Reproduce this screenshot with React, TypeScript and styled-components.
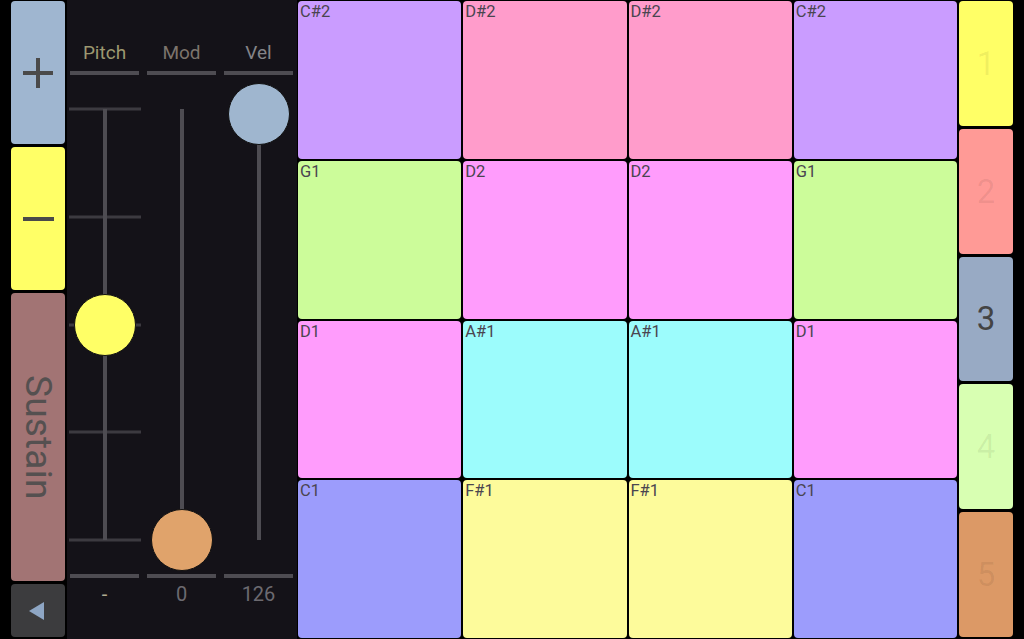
import { createGlobalStyle, styled } from "styled-components";

const GlobalStyle = createGlobalStyle`
  html, body {
    margin: 0;
    padding: 0;
    background: #000000;
    font-family: Roboto, "Liberation Sans", sans-serif;
  }
`;

const Screen = styled.div`
  display: flex;
  width: 1024px;
  height: 639px;
  background: #000000;
  overflow: hidden;
`;

const SideColumn = styled.div<{ $ml: number }>`
  display: flex;
  flex-direction: column;
  gap: 3px;
  width: 54px;
  margin-left: ${({ $ml }) => $ml}px;
  padding: 1px 0 2px;
  box-sizing: border-box;
`;

const SideButton = styled.div<{ $bg: string; $h?: number }>`
  background: ${({ $bg }) => $bg};
  border-radius: 4px;
  height: ${({ $h }) => ($h ? `${$h}px` : "auto")};
  flex: ${({ $h }) => ($h ? "none" : "1")};
  display: flex;
  align-items: center;
  justify-content: center;
  position: relative;
`;

const PlusMark = styled.div`
  position: relative;
  width: 30px;
  height: 30px;
  &::before,
  &::after {
    content: "";
    position: absolute;
    background: #4a4a4a;
  }
  &::before {
    left: 0;
    right: 0;
    top: 13px;
    height: 4px;
  }
  &::after {
    top: 0;
    bottom: 0;
    left: 13px;
    width: 4px;
  }
`;

const MinusMark = styled.div`
  width: 31px;
  height: 4px;
  background: #4a4a4a;
`;

const SustainText = styled.span`
  writing-mode: vertical-rl;
  font-size: 37px;
  color: #555050;
  letter-spacing: 0.2px;
`;

const BackArrow = styled.div`
  width: 0;
  height: 0;
  border-top: 9px solid transparent;
  border-bottom: 9px solid transparent;
  border-right: 15px solid #8ea6c4;
  margin-right: 4px;
`;

const Panel = styled.div`
  display: flex;
  gap: 8px;
  width: 230px;
  margin-left: 2px;
  padding: 0 4px 0 3px;
  box-sizing: border-box;
  background: #141218;
`;

const SliderColumn = styled.div`
  display: flex;
  flex-direction: column;
  width: 69px;
`;

const SliderLabel = styled.div<{ $color: string }>`
  height: 71px;
  display: flex;
  align-items: flex-end;
  justify-content: center;
  padding-bottom: 7px;
  box-sizing: border-box;
  font-size: 19px;
  color: ${({ $color }) => $color};
`;

const Rule = styled.div`
  height: 4px;
  background: #4e4c52;
`;

const TrackArea = styled.div`
  position: relative;
  height: 499px;
`;

const Rail = styled.div`
  position: absolute;
  left: 33px;
  width: 4px;
  top: 34px;
  bottom: 34px;
  background: #4e4c52;
`;

const Tick = styled.div`
  position: absolute;
  left: -1px;
  right: -2px;
  height: 3px;
  background: #3c3a40;
  transform: translateY(-1.5px);
`;

const Knob = styled.div<{ $color: string }>`
  position: absolute;
  left: 4px;
  width: 60px;
  height: 60px;
  border-radius: 50%;
  background: ${({ $color }) => $color};
  border: 1.5px solid #111;
  transform: translateY(-31px);
`;

const ValueText = styled.div<{ $color: string }>`
  height: 32px;
  display: flex;
  align-items: center;
  justify-content: center;
  font-size: 20px;
  color: ${({ $color }) => $color};
`;

const PadGrid = styled.div`
  display: grid;
  grid-template-columns: repeat(4, 1fr);
  grid-template-rows: repeat(4, 1fr);
  gap: 2px;
  width: 661px;
  padding: 1px;
  box-sizing: border-box;
  background: #000000;
`;

const Pad = styled.div<{ $bg: string }>`
  background: ${({ $bg }) => $bg};
  border-radius: 4px;
  padding: 2px 2px;
  font-size: 16.5px;
  line-height: 18px;
  color: #4a4550;
`;

const BankButton = styled(SideButton)<{ $active: boolean }>`
  font-size: 33px;
  color: ${({ $active }) => ($active ? "#444444" : "rgba(0, 0, 0, 0.07)")};
`;

const C = {
  lav: "#ca9cff",
  pink: "#ff9ccb",
  green: "#ccfc9a",
  mag: "#ff9cfc",
  cyan: "#9cfcfc",
  blue: "#9c9cfc",
  yel: "#fdfb9b",
};

const pads: [string, string][] = [
  ["C#2", C.lav], ["D#2", C.pink], ["D#2", C.pink], ["C#2", C.lav],
  ["G1", C.green], ["D2", C.mag], ["D2", C.mag], ["G1", C.green],
  ["D1", C.mag], ["A#1", C.cyan], ["A#1", C.cyan], ["D1", C.mag],
  ["C1", C.blue], ["F#1", C.yel], ["F#1", C.yel], ["C1", C.blue],
];

const banks = [
  { n: "1", bg: "#ffff66" },
  { n: "2", bg: "#ff9a96" },
  { n: "3", bg: "#98aac4" },
  { n: "4", bg: "#d8ffb2" },
  { n: "5", bg: "#dc9966" },
];

const RAIL_TOP = 34;
const RAIL_LEN = 431;

type SliderProps = {
  label: string;
  labelColor: string;
  value: string;
  valueColor: string;
  pos: number; // 0 = top, 1 = bottom
  knob: string;
  ticks?: boolean;
};

const Slider = ({ label, labelColor, value, valueColor, pos, knob, ticks }: SliderProps) => (
  <SliderColumn>
    <SliderLabel $color={labelColor}>{label}</SliderLabel>
    <Rule />
    <TrackArea>
      {ticks &&
        [0, 0.25, 0.5, 0.75, 1].map((t) => (
          <Tick key={t} style={{ top: RAIL_TOP + t * RAIL_LEN }} />
        ))}
      <Rail />
      <Knob $color={knob} style={{ top: RAIL_TOP + pos * RAIL_LEN }} />
    </TrackArea>
    <Rule />
    <ValueText $color={valueColor}>{value}</ValueText>
  </SliderColumn>
);

export default function App() {
  return (
    <>
      <GlobalStyle />
      <Screen>
        <SideColumn $ml={11}>
          <SideButton $bg="#9fb6d0" $h={143}>
            <PlusMark />
          </SideButton>
          <SideButton $bg="#ffff66" $h={143}>
            <MinusMark />
          </SideButton>
          <SideButton $bg="#a27474">
            <SustainText>Sustain</SustainText>
          </SideButton>
          <SideButton $bg="#3c3c3e" $h={53}>
            <BackArrow />
          </SideButton>
        </SideColumn>

        <Panel>
          <Slider label="Pitch" labelColor="#9c9870" value="-" valueColor="#b0ac90" pos={0.5} knob="#ffff66" ticks />
          <Slider label="Mod" labelColor="#7c746c" value="0" valueColor="#6c6a70" pos={1} knob="#e0a36b" />
          <Slider label="Vel" labelColor="#848488" value="126" valueColor="#6c6a70" pos={0.011} knob="#9fb6cf" />
        </Panel>

        <PadGrid>
          {pads.map(([note, bg], i) => (
            <Pad key={i} $bg={bg}>
              {note}
            </Pad>
          ))}
        </PadGrid>

        <SideColumn $ml={1}>
          {banks.map((b) => (
            <BankButton key={b.n} $bg={b.bg} $active={b.n === "3"}>
              {b.n}
            </BankButton>
          ))}
        </SideColumn>
      </Screen>
    </>
  );
}
